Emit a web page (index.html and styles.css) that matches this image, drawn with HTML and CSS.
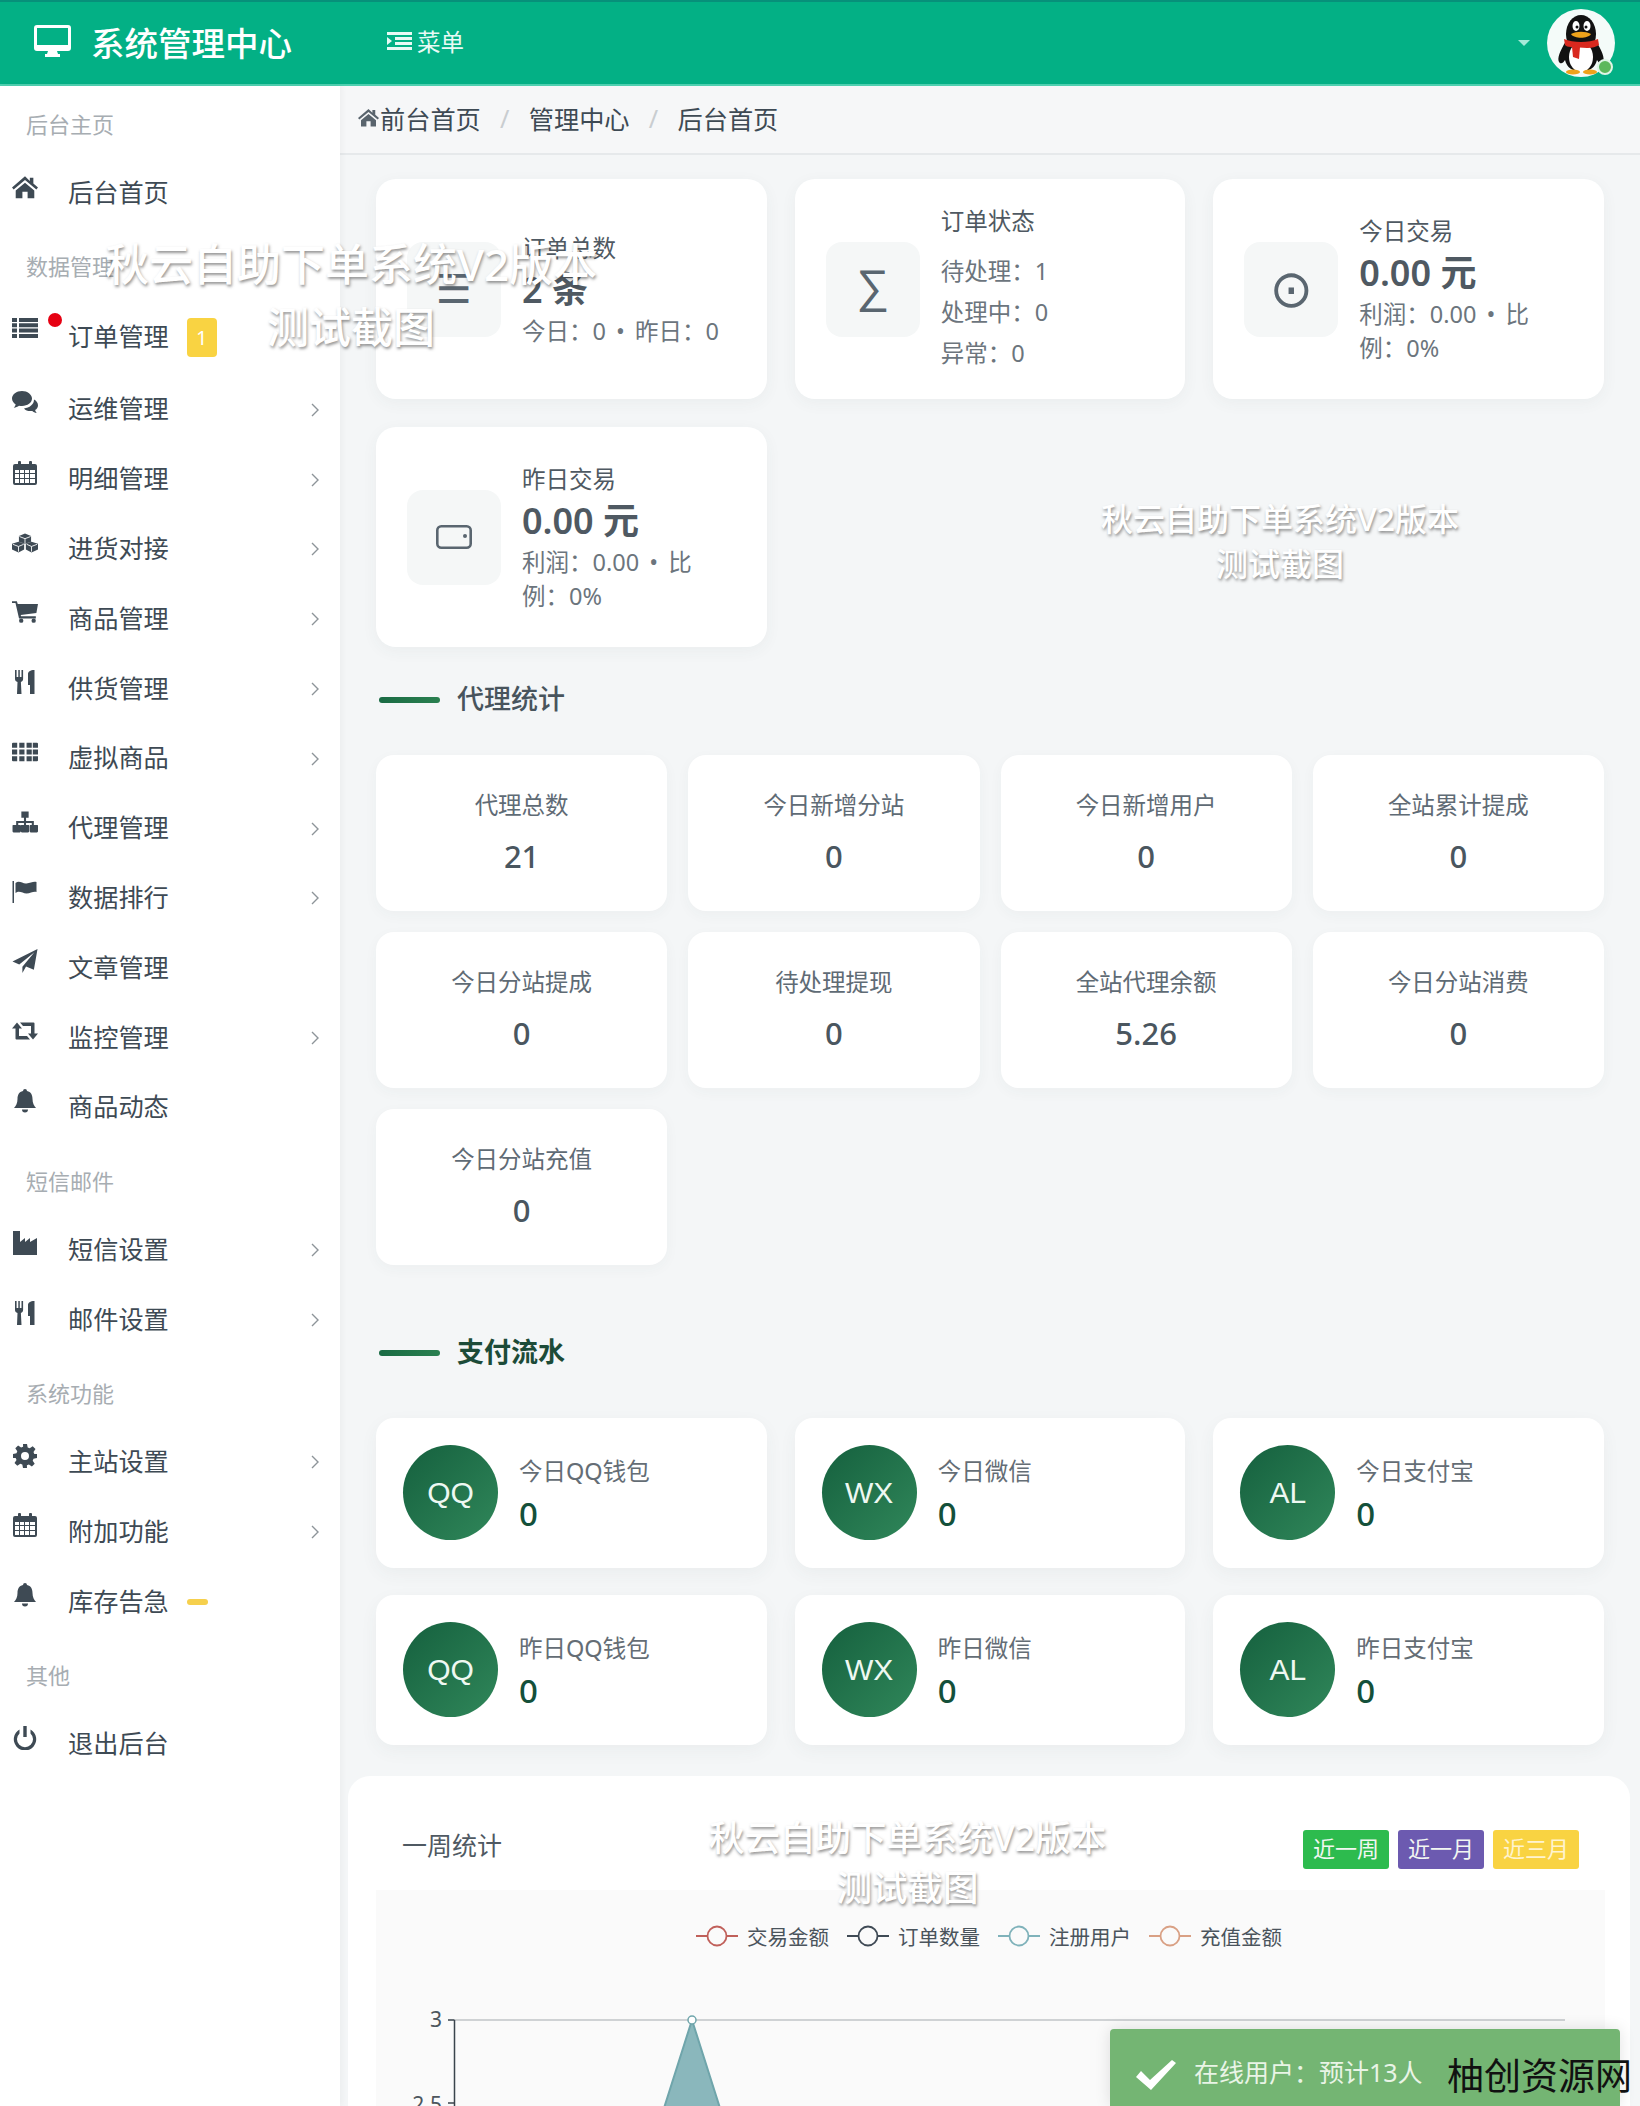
FILE: index.html
```html
<!DOCTYPE html>
<html lang="zh-CN">
<head>
  <meta charset="utf-8">
  <title>系统管理中心</title>
  <link rel="stylesheet" href="styles.css">
</head>
<body>
  <svg class="icon-defs" width="0" height="0">
    <defs>
      <symbol id="i-home" viewBox="0 0 28 24"><path d="M14 .500 0 12.500l1.800 2.300L14 4.500l12.200 10.300 1.800-2.300-5-4.300V2h-3.800v3.500zM4 15.800V24h7.200v-7h5.600v7H24v-8.200L14 7.300z"/></symbol>
      <symbol id="i-list" viewBox="0 0 26 20"><path d="M0 0h5v4H0zM7 0h19v4H7zM0 5.300h5v4H0zM7 5.300h19v4H7zM0 10.600h5v4H0zM7 10.600h19v4H7zM0 16h5v4H0zM7 16h19v4H7z"/></symbol>
      <symbol id="i-comments" viewBox="0 0 26 24"><path d="M10 0C4.500 0 0 3.400 0 7.600c0 2.400 1.500 4.500 3.700 5.900-.3 1.300-1 2.400-1.900 3.300 2-.3 3.800-1 5.200-2.100 1 .2 2 .3 3 .3 5.500 0 10-3.300 10-7.400S15.500 0 10 0z"/><path d="M22 8.500c.1 4.900-4.500 8.400-10 8.900 1.400 1.700 3.700 2.700 6.300 2.700.7 0 1.300-.1 2-.2 1 1 2.600 1.800 4.400 2.100-.8-.8-1.400-1.800-1.600-2.900 1.800-1.200 2.900-3 2.900-4.900 0-2.400-1.600-4.500-4-5.700z"/></symbol>
      <symbol id="i-calendar" viewBox="0 0 24 24"><path fill-rule="evenodd" d="M2 3h3V1a1 1 0 0 1 1-1h1a1 1 0 0 1 1 1v2h8V1a1 1 0 0 1 1-1h1a1 1 0 0 1 1 1v2h3a2 2 0 0 1 2 2v17a2 2 0 0 1-2 2H2a2 2 0 0 1-2-2V5a2 2 0 0 1 2-2zM2 9v3h4V9zm5 0v3h4V9zm5 0v3h4V9zm5 0v3h5V9zM2 13v4h4v-4zm5 0v4h4v-4zm5 0v4h4v-4zm5 0v4h5v-4zM2 18v4h4v-4zm5 0v4h4v-4zm5 0v4h4v-4zm5 0v4h5v-4z"/></symbol>
      <symbol id="i-cubes" viewBox="0 0 30 22"><path d="M15 0l7 3v6.500L15 12l-7-2.500V3zM7.500 9.500 14 12v6.500L7.500 22 0 18.500V12zM22.500 9.500 30 12v6.500L22.500 22 16 18.500V12z"/><path d="M8.500 3.500 15 6l6.500-2.500M15 6v5.500M1 12.500 7.500 15l6-2.500M7.500 15v6M17 12.500l5.500 2.500 6.500-2.500M22.500 15v6" fill="none" stroke="#fff" stroke-width="1"/></symbol>
      <symbol id="i-cart" viewBox="0 0 24 20"><path d="M0 0h4.500l.8 2.500H24l-1.500 8.500-14.500 1.700.4 1.300H22v2H6.500L3.200 1.800H0z"/><circle cx="8.500" cy="18" r="2"/><circle cx="20" cy="18" r="2"/></symbol>
      <symbol id="i-cutlery" viewBox="0 0 20 24"><path d="M0 0h1.600v7h1.700V0h1.500v7h1.700V0h1.600v9c0 1.500-1 2.500-2.200 3L6.500 24H2l.5-12C1 11.500 0 10.500 0 9zM13 4c0-2 2-4 6.500-4v24H15v-9h-2z"/></symbol>
      <symbol id="i-grid" viewBox="0 0 25 18"><path d="M0 1a1 1 0 0 1 1-1h4v5H0zM7 0h5v5H7zM14 0h5v5h-5zM20 0h4a1 1 0 0 1 1 1v4h-5zM0 6.500h5v5H0zM7 6.500h5v5H7zM14 6.500h5v5h-5zM20 6.500h5v5h-5zM0 13h5v5H1a1 1 0 0 1-1-1zM7 13h5v5H7zM14 13h5v5h-5zM20 13h5v4a1 1 0 0 1-1 1h-4z"/></symbol>
      <symbol id="i-sitemap" viewBox="0 0 25 20"><path d="M9 0h7v6h-2.500v3H21v4h3.500a.5.500 0 0 1 .5.500V19a1 1 0 0 1-1 1h-6a1 1 0 0 1-1-1v-5.500a.5.500 0 0 1 .5-.5H19v-2h-5.500v2H16a.5.500 0 0 1 .5.500V19a1 1 0 0 1-1 1h-6a1 1 0 0 1-1-1v-5.500a.5.500 0 0 1 .5-.5h2.500v-2H6v2h2a.5.500 0 0 1 .5.500V19a1 1 0 0 1-1 1h-6a1 1 0 0 1-1-1v-5.500a.5.500 0 0 1 .5-.5H4V9h7.500V6H9z"/></symbol>
      <symbol id="i-flag" viewBox="0 0 25 24"><path d="M0 1h1.500v22H0zM3 3c4-3 7 1 11 .5 4-.5 7-2.500 10-1.500v10c-3-1-6 1.500-10 1.500S7 10 3 13z"/></symbol>
      <symbol id="i-plane" viewBox="0 0 24 23"><path d="M24 0 20.500 20 13 16.800 9.500 23V17L21 3 6.500 14.800 0 12z"/></symbol>
      <symbol id="i-retweet" viewBox="0 0 26 17"><path d="M5 0l5 6H7v7.500h8l3 3.500H4.500a1 1 0 0 1-1-1V6H0zM8 0h13.500a1 1 0 0 1 1 1v10H26l-5 6-5-6h3V3.500h-8z"/></symbol>
      <symbol id="i-bell" viewBox="0 0 22 24"><path d="M11 0a2 2 0 0 1 2 2c4 .8 5.500 4 5.500 8 0 4 1.500 7 3.500 9H0c2-2 3.500-5 3.500-9 0-4 1.500-7.200 5.500-8a2 2 0 0 1 2-2zM8 20.500h6a3 3 0 0 1-6 0z"/></symbol>
      <symbol id="i-factory" viewBox="0 0 24 24"><path d="M0 0h7v11l5-4v4l5-4v4l7-4v17H0z"/></symbol>
      <symbol id="i-gear" viewBox="0 0 24 24"><path fill-rule="evenodd" d="M10 0h4l.7 3.500 2 .8 3-2 2.800 2.800-2 3 .8 2L24 10v4l-3.500.7-.8 2 2 3-2.800 2.800-3-2-2 .8L14 24h-4l-.7-3.500-2-.8-3 2-2.800-2.800 2-3-.8-2L0 14v-4l3.500-.7.8-2-2-3 2.800-2.800 3 2 2-.8zM12 8a4 4 0 1 0 0 8 4 4 0 0 0 0-8z"/></symbol>
      <symbol id="i-power" viewBox="0 0 22 24"><path d="M9.300 0h3.400v11H9.300zM5.500 3.500v3.900A8 8 0 1 0 16.500 7.400V3.500a11.200 11.200 0 1 1-11 0z"/></symbol>
      <symbol id="i-chevron" viewBox="0 0 8 14"><path d="M1 1l6 6-6 6" fill="none" stroke="currentColor" stroke-width="1.400"/></symbol>
    </defs>
  </svg>

  <header class="topbar">
    <div class="brand">
      <svg class="brand-icon" viewBox="0 0 37 32"><path fill-rule="evenodd" d="M3 0h31a3 3 0 0 1 3 3v20a3 3 0 0 1-3 3H23l1 3h2v3H11v-3h2l1-3H3a3 3 0 0 1-3-3V3a3 3 0 0 1 3-3zm0 3v17h31V3z"/></svg>
      <span>系统管理中心</span>
    </div>
    <div class="menu-toggle">
      <svg class="menu-icon" viewBox="0 0 25 18"><path d="M0 0h25v3H0zM8 5h17v3H8zM8 10h17v3H8zM0 15h25v3H0zM0 5l5 4-5 4z"/></svg>
      <span>菜单</span>
    </div>
    <div class="user-box">
      <span class="caret"></span>
      <div class="avatar">
        <svg viewBox="0 0 68 68">
          <circle cx="34" cy="34" r="34" fill="#f4fbf9"/>
          <ellipse cx="34" cy="25" rx="15" ry="19" fill="#111"/>
          <path d="M19 32c-6 10-9 17-7 21 2 3 5 0 6-2 2 8 7 11 16 11s14-3 16-11c1 2 4 5 6 2 2-4-1-11-7-21z" fill="#111"/>
          <ellipse cx="34" cy="48" rx="12" ry="15" fill="#fff"/>
          <path d="M17 30c9 4 25 4 34 0l1 6c-3 2-7 3-11 3l-1 0-16-1c-3 0-5-1-6-2z" fill="#d8281e"/>
          <path d="M25 38h8l-1 12-6-2z" fill="#d8281e"/>
          <ellipse cx="29" cy="17" rx="3.500" ry="5" fill="#fff"/>
          <ellipse cx="40" cy="17" rx="3.500" ry="5" fill="#fff"/>
          <circle cx="30" cy="18" r="1.500" fill="#111"/>
          <circle cx="39" cy="18" r="1.500" fill="#111"/>
          <path d="M24 25c6-3 14-3 20 0-3 5-17 5-20 0z" fill="#eea21b"/>
          <ellipse cx="26" cy="63" rx="7" ry="2.500" fill="#eea21b"/>
          <ellipse cx="43" cy="63" rx="7" ry="2.500" fill="#eea21b"/>
        </svg>
        <span class="online-dot"></span>
      </div>
    </div>
  </header>

  <div class="layout">
    <aside class="sidebar">
      <div class="nav-label">后台主页</div>
      <a class="nav-item"><svg class="nav-icon"><use href="#i-home"/></svg><span>后台首页</span></a>

      <div class="nav-label">数据管理</div>
      <a class="nav-item nav-item-tall">
        <svg class="nav-icon"><use href="#i-list"/></svg>
        <i class="red-dot"></i>
        <span>订单管理</span>
        <b class="nav-badge">1</b>
      </a>
      <a class="nav-item"><svg class="nav-icon"><use href="#i-comments"/></svg><span>运维管理</span><svg class="chevron"><use href="#i-chevron"/></svg></a>
      <a class="nav-item"><svg class="nav-icon"><use href="#i-calendar"/></svg><span>明细管理</span><svg class="chevron"><use href="#i-chevron"/></svg></a>
      <a class="nav-item"><svg class="nav-icon"><use href="#i-cubes"/></svg><span>进货对接</span><svg class="chevron"><use href="#i-chevron"/></svg></a>
      <a class="nav-item"><svg class="nav-icon"><use href="#i-cart"/></svg><span>商品管理</span><svg class="chevron"><use href="#i-chevron"/></svg></a>
      <a class="nav-item"><svg class="nav-icon"><use href="#i-cutlery"/></svg><span>供货管理</span><svg class="chevron"><use href="#i-chevron"/></svg></a>
      <a class="nav-item"><svg class="nav-icon"><use href="#i-grid"/></svg><span>虚拟商品</span><svg class="chevron"><use href="#i-chevron"/></svg></a>
      <a class="nav-item"><svg class="nav-icon"><use href="#i-sitemap"/></svg><span>代理管理</span><svg class="chevron"><use href="#i-chevron"/></svg></a>
      <a class="nav-item"><svg class="nav-icon"><use href="#i-flag"/></svg><span>数据排行</span><svg class="chevron"><use href="#i-chevron"/></svg></a>
      <a class="nav-item"><svg class="nav-icon"><use href="#i-plane"/></svg><span>文章管理</span></a>
      <a class="nav-item"><svg class="nav-icon"><use href="#i-retweet"/></svg><span>监控管理</span><svg class="chevron"><use href="#i-chevron"/></svg></a>
      <a class="nav-item"><svg class="nav-icon"><use href="#i-bell"/></svg><span>商品动态</span></a>

      <div class="nav-label">短信邮件</div>
      <a class="nav-item"><svg class="nav-icon"><use href="#i-factory"/></svg><span>短信设置</span><svg class="chevron"><use href="#i-chevron"/></svg></a>
      <a class="nav-item"><svg class="nav-icon"><use href="#i-cutlery"/></svg><span>邮件设置</span><svg class="chevron"><use href="#i-chevron"/></svg></a>

      <div class="nav-label">系统功能</div>
      <a class="nav-item"><svg class="nav-icon"><use href="#i-gear"/></svg><span>主站设置</span><svg class="chevron"><use href="#i-chevron"/></svg></a>
      <a class="nav-item"><svg class="nav-icon"><use href="#i-calendar"/></svg><span>附加功能</span><svg class="chevron"><use href="#i-chevron"/></svg></a>
      <a class="nav-item"><svg class="nav-icon"><use href="#i-bell"/></svg><span>库存告急</span><i class="stock-dash"></i></a>

      <div class="nav-label">其他</div>
      <a class="nav-item"><svg class="nav-icon"><use href="#i-power"/></svg><span>退出后台</span></a>
    </aside>

    <main class="main">
      <nav class="crumbs">
        <svg class="crumb-home"><use href="#i-home"/></svg>
        <span>前台首页</span>
        <i class="crumb-sep">/</i>
        <span>管理中心</span>
        <i class="crumb-sep">/</i>
        <span>后台首页</span>
      </nav>

      <div class="content">
        <section class="grid-3">
          <div class="info-card">
            <div class="tile tile-glyph">☰</div>
            <div class="info-text">
              <div class="info-title">订单总数</div>
              <div class="info-value">2 条</div>
              <div class="info-sub">今日：0 • 昨日：0</div>
            </div>
          </div>
          <div class="info-card">
            <div class="tile tile-glyph tile-sigma">∑</div>
            <div class="info-text info-text-list">
              <div class="info-title">订单状态</div>
              <div class="info-line">待处理：1</div>
              <div class="info-line">处理中：0</div>
              <div class="info-line">异常：0</div>
            </div>
          </div>
          <div class="info-card">
            <div class="tile tile-glyph tile-dot">⊙</div>
            <div class="info-text">
              <div class="info-title">今日交易</div>
              <div class="info-value">0.00 元</div>
              <div class="info-sub">利润：0.00 • 比<br>例：0%</div>
            </div>
          </div>
          <div class="info-card">
            <div class="tile">
              <svg class="wallet" viewBox="0 0 36 24"><rect x="1.300" y="1.300" width="33.400" height="21.400" rx="4" fill="none" stroke="currentColor" stroke-width="2.600"/><circle cx="29" cy="11" r="2" fill="currentColor"/></svg>
            </div>
            <div class="info-text">
              <div class="info-title">昨日交易</div>
              <div class="info-value">0.00 元</div>
              <div class="info-sub">利润：0.00 • 比<br>例：0%</div>
            </div>
          </div>
        </section>

        <h3 class="section-head section-head-agent"><i class="section-bar"></i>代理统计</h3>
        <section class="grid-4">
          <div class="stat-card"><div class="stat-title">代理总数</div><div class="stat-value">21</div></div>
          <div class="stat-card"><div class="stat-title">今日新增分站</div><div class="stat-value">0</div></div>
          <div class="stat-card"><div class="stat-title">今日新增用户</div><div class="stat-value">0</div></div>
          <div class="stat-card"><div class="stat-title">全站累计提成</div><div class="stat-value">0</div></div>
          <div class="stat-card"><div class="stat-title">今日分站提成</div><div class="stat-value">0</div></div>
          <div class="stat-card"><div class="stat-title">待处理提现</div><div class="stat-value">0</div></div>
          <div class="stat-card"><div class="stat-title">全站代理余额</div><div class="stat-value">5.26</div></div>
          <div class="stat-card"><div class="stat-title">今日分站消费</div><div class="stat-value">0</div></div>
          <div class="stat-card"><div class="stat-title">今日分站充值</div><div class="stat-value">0</div></div>
        </section>

        <h3 class="section-head section-head-pay"><i class="section-bar"></i>支付流水</h3>
        <section class="grid-3 grid-pay">
          <div class="pay-card"><div class="pay-circle">QQ</div><div class="pay-text"><div class="pay-title">今日QQ钱包</div><div class="pay-value">0</div></div></div>
          <div class="pay-card"><div class="pay-circle">WX</div><div class="pay-text"><div class="pay-title">今日微信</div><div class="pay-value">0</div></div></div>
          <div class="pay-card"><div class="pay-circle">AL</div><div class="pay-text"><div class="pay-title">今日支付宝</div><div class="pay-value">0</div></div></div>
          <div class="pay-card"><div class="pay-circle">QQ</div><div class="pay-text"><div class="pay-title">昨日QQ钱包</div><div class="pay-value">0</div></div></div>
          <div class="pay-card"><div class="pay-circle">WX</div><div class="pay-text"><div class="pay-title">昨日微信</div><div class="pay-value">0</div></div></div>
          <div class="pay-card"><div class="pay-circle">AL</div><div class="pay-text"><div class="pay-title">昨日支付宝</div><div class="pay-value">0</div></div></div>
        </section>

        <section class="chart-panel">
          <div class="chart-head">
            <span class="chart-title">一周统计</span>
            <div class="range-btns">
              <button class="range-btn range-green">近一周</button>
              <button class="range-btn range-purple">近一月</button>
              <button class="range-btn range-yellow">近三月</button>
            </div>
          </div>
          <div class="chart-body">
            <div class="legend">
              <span class="legend-item"><svg class="legend-mark legend-red" viewBox="0 0 42 24"><path d="M0 12h42"/><circle cx="21" cy="12" r="9.500"/></svg>交易金额</span>
              <span class="legend-item"><svg class="legend-mark legend-navy" viewBox="0 0 42 24"><path d="M0 12h42"/><circle cx="21" cy="12" r="9.500"/></svg>订单数量</span>
              <span class="legend-item"><svg class="legend-mark legend-teal" viewBox="0 0 42 24"><path d="M0 12h42"/><circle cx="21" cy="12" r="9.500"/></svg>注册用户</span>
              <span class="legend-item"><svg class="legend-mark legend-orange" viewBox="0 0 42 24"><path d="M0 12h42"/><circle cx="21" cy="12" r="9.500"/></svg>充值金额</span>
            </div>
            <svg class="plot" viewBox="0 0 1228 155">
              <path d="M78.500 68H1189" stroke="#cfd2d4" stroke-width="2" fill="none"/>
              <path d="M78.500 68V260M72 68h6.500M72 151h6.500" stroke="#3a444c" stroke-width="1.500" fill="none"/>
              <text x="66" y="75" text-anchor="end" class="plot-label">3</text>
              <text x="66" y="160" text-anchor="end" class="plot-label">2.5</text>
              <path d="M255 260 316 68 377 260z" fill="#8ab7bc" stroke="#6fa5ab" stroke-width="2"/>
              <circle cx="316" cy="68" r="4" fill="#fff" stroke="#6fa5ab" stroke-width="1.500"/>
            </svg>
          </div>
        </section>
      </div>
    </main>
  </div>

  <div class="watermark wm-one">秋云自助下单系统V2版本<br><small>测试截图</small></div>
  <div class="watermark wm-two">秋云自助下单系统V2版本<br>测试截图</div>
  <div class="watermark wm-three">秋云自助下单系统V2版本<br>测试截图</div>

  <div class="toast">
    <svg class="toast-check" viewBox="0 0 40 30"><path d="M0 17l5-6 9 9L36 0l4 3-25 27z"/></svg>
    <span>在线用户：预计13人</span>
  </div>
  <div class="site-mark">柚创资源网</div>
</body>
</html>
```

FILE: styles.css
```css
* {
  box-sizing: border-box;
}
html, body {
  margin: 0;
  height: 100%;
}
body {
  position: relative;
  display: flex;
  flex-direction: column;
  height: 100vh;
  overflow: hidden;
  background-color: #f4f6f7;
  color: #4f5962;
  font-family: "Noto Sans", "Noto Sans CJK SC", sans-serif;
  font-size: 23.5px;
}
.icon-defs {
  position: absolute;
}

/* top bar */
.topbar {
  display: flex;
  align-items: center;
  flex: none;
  height: 86px;
  background-color: #03b085;
  border-top: 2px solid #07907a;
  border-bottom: 2px solid #4fd0b0;
  color: #fff;
}
.brand {
  display: flex;
  align-items: center;
  gap: 20px;
  width: 340px;
  padding: 0 0 4px 34px;
  font-size: 33.5px;
  font-weight: 500;
}
.brand-icon {
  width: 37px;
  height: 32px;
  fill: #fff;
}
.menu-toggle {
  display: flex;
  align-items: center;
  gap: 5px;
  margin-left: 47px;
  padding-bottom: 4px;
  color: #e8faf5;
}
.menu-icon {
  width: 25px;
  height: 18px;
  fill: #e8faf5;
}
.user-box {
  display: flex;
  align-items: center;
  gap: 17px;
  margin-left: auto;
  padding-right: 25px;
}
.caret {
  width: 0;
  height: 0;
  border-left: 6px solid transparent;
  border-right: 6px solid transparent;
  border-top: 6px solid #a5ead9;
}
.avatar {
  position: relative;
  width: 68px;
  height: 68px;
}
.avatar svg {
  display: block;
  width: 68px;
  height: 68px;
}
.online-dot {
  position: absolute;
  right: 2px;
  bottom: 2px;
  width: 16px;
  height: 16px;
  background-color: #5cb85c;
  border: 2px solid #dff5e6;
  border-radius: 50%;
}

/* sidebar */
.layout {
  display: flex;
  flex: 1;
  min-height: 0;
}
.sidebar {
  flex: none;
  width: 340px;
  background-color: #fff;
  box-shadow: 2px 0 6px rgba(0, 0, 0, 0.04);
  z-index: 1;
}
.nav-label {
  height: 72.6px;
  padding: 22px 0 0 26px;
  color: #a7adb2;
  font-size: 22px;
  line-height: 32px;
}
.nav-item {
  display: flex;
  align-items: center;
  position: relative;
  height: 69.8px;
  padding: 0 0 5px 68px;
  color: #3e4a54;
  font-size: 25.2px;
}
.nav-item-tall {
  height: 74px;
}
.nav-icon {
  position: absolute;
  left: 12px;
  top: 16px;
  width: 26px;
  height: 24px;
  fill: #3e4a54;
}
.nav-item-tall .nav-icon {
  top: 15px;
}
.chevron {
  margin-left: auto;
  margin-right: 21px;
  margin-top: 5px;
  width: 8px;
  height: 14px;
  color: #8d9499;
}
.red-dot {
  position: absolute;
  left: 48px;
  top: 12px;
  width: 14px;
  height: 14px;
  background-color: #e60012;
  border-radius: 50%;
}
.nav-badge {
  margin: 5px 0 0 18px;
  width: 30px;
  height: 39px;
  background-color: #f9d342;
  border-radius: 4px;
  color: #fff;
  font-size: 20px;
  font-weight: 400;
  line-height: 39px;
  text-align: center;
}
.stock-dash {
  margin: 5px 0 0 18px;
  width: 21px;
  height: 6px;
  background-color: #f6d04d;
  border-radius: 3px;
}

/* breadcrumb */
.main {
  flex: 1;
  min-width: 0;
}
.crumbs {
  display: flex;
  align-items: center;
  height: 69px;
  padding: 0 0 4px 18px;
  background-color: #f6f7f8;
  border-bottom: 2px solid #e6e9eb;
  color: #3e4a54;
  font-size: 25.2px;
}
.crumb-home {
  width: 21px;
  height: 19px;
  margin-right: 1px;
  fill: #59646d;
}
.crumb-sep {
  width: 48px;
  color: #c9cdd0;
  font-style: normal;
  text-align: center;
}

/* cards */
.content {
  padding: 24px 36px 0;
}
.grid-3 {
  display: grid;
  grid-template-columns: repeat(3, 1fr);
  gap: 28px;
}
.info-card {
  display: flex;
  align-items: center;
  gap: 21px;
  height: 220px;
  padding: 0 31px;
  background-color: #fff;
  border-radius: 20px;
  box-shadow: 0 4px 16px rgba(60, 70, 80, 0.05);
}
.tile {
  display: flex;
  align-items: center;
  justify-content: center;
  flex: none;
  width: 94px;
  height: 95px;
  background-color: #f5f7f7;
  border-radius: 16px;
  color: #5a6670;
}
.tile-glyph {
  font-family: "DejaVu Sans", sans-serif;
  font-size: 40px;
}
.tile-sigma {
  padding-bottom: 6px;
  font-family: "Liberation Sans", sans-serif;
  font-size: 46px;
}
.tile-dot {
  font-size: 52px;
}
.wallet {
  width: 36px;
  height: 24px;
}
.info-title {
  line-height: 34px;
}
.info-value {
  color: #4f5962;
  font-size: 36px;
  font-weight: 600;
  line-height: 49px;
}
.info-sub {
  color: #6c757d;
  line-height: 34px;
  word-spacing: 4px;
}
.info-text-list .info-title {
  margin-bottom: 13px;
}
.info-line {
  color: #6c757d;
  line-height: 41px;
}

/* section titles */
.section-head {
  display: flex;
  align-items: center;
  gap: 17px;
  height: 54px;
  margin: 26px 0 28px;
  padding: 0 0 3px 3px;
  font-size: 27px;
  font-weight: 500;
  line-height: 40px;
}
.section-head-agent {
  color: #48545c;
}
.section-head-pay {
  margin: 61px 0 38px;
  color: #1c4b38;
  font-weight: 700;
}
.section-bar {
  width: 61px;
  height: 6px;
  margin-top: 3px;
  background: linear-gradient(90deg, #1a6b44, #2a8050);
  border-radius: 3px;
}

/* agent numbers */
.grid-4 {
  display: grid;
  grid-template-columns: repeat(4, 1fr);
  gap: 21px;
}
.stat-card {
  height: 156px;
  padding-top: 32px;
  background-color: #fff;
  border-radius: 18px;
  box-shadow: 0 4px 14px rgba(60, 70, 80, 0.04);
  text-align: center;
}
.stat-title {
  color: #5f6b75;
  line-height: 36px;
}
.stat-value {
  margin-top: 13px;
  color: #4a565f;
  font-size: 31px;
  font-weight: 500;
  line-height: 40px;
}

/* payment cards */
.grid-pay {
  row-gap: 27px;
}
.pay-card {
  display: flex;
  align-items: center;
  gap: 21px;
  height: 150px;
  padding-left: 27px;
  background-color: #fff;
  border-radius: 18px;
  box-shadow: 0 6px 18px rgba(60, 70, 80, 0.05);
}
.pay-circle {
  flex: none;
  width: 95px;
  height: 95px;
  margin-bottom: 1px;
  background: linear-gradient(135deg, #15603e, #30875a);
  border-radius: 50%;
  color: #eef8f2;
  font-family: "Liberation Sans", sans-serif;
  font-size: 30px;
  line-height: 95px;
  text-align: center;
}
.pay-text {
  padding-top: 3px;
}
.pay-title {
  color: #646d75;
  line-height: 36px;
}
.pay-value {
  margin-top: 3px;
  color: #14503a;
  font-size: 33px;
  font-weight: 500;
  line-height: 44px;
}

/* chart */
.chart-panel {
  margin: 31px -26px 0 -28px;
  padding: 0 25px 0 28px;
  background-color: #fff;
  border-radius: 22px 22px 0 0;
}
.chart-head {
  display: flex;
  align-items: center;
  justify-content: space-between;
  height: 114px;
  padding: 33px 26px 0;
}
.chart-title {
  margin-bottom: 12px;
  color: #4f5962;
  font-size: 25px;
}
.range-btns {
  display: flex;
  gap: 9px;
}
.range-btn {
  width: 86px;
  height: 39px;
  padding: 0 0 6px;
  border: none;
  border-radius: 3px;
  color: #f2f7f2;
  font-family: inherit;
  font-size: 22px;
}
.range-green {
  background-color: #2dbb4e;
}
.range-purple {
  background-color: #6c5ab0;
}
.range-yellow {
  background-color: #f9d342;
  color: #fff4cf;
}
.chart-body {
  padding-top: 34px;
  background-color: #fafafa;
}
.legend {
  display: flex;
  justify-content: center;
  gap: 18px;
  height: 28px;
  padding-right: 3px;
}
.legend-item {
  display: flex;
  align-items: center;
  gap: 9px;
  padding-bottom: 5px;
  color: #4a545c;
  font-size: 20.5px;
}
.legend-mark {
  width: 42px;
  height: 24px;
  fill: #fafafa;
  stroke-width: 1.800;
}
.legend-red {
  stroke: #c0605a;
}
.legend-navy {
  stroke: #3f4a55;
}
.legend-teal {
  stroke: #7fb2ba;
}
.legend-orange {
  stroke: #d9a084;
}
.plot {
  display: block;
  width: 1228px;
  height: 155px;
}
.plot-label {
  fill: #4d565d;
  font-size: 21px;
}

/* overlays */
.watermark {
  position: absolute;
  z-index: 5;
  color: #fff;
  font-weight: 500;
  line-height: 1.4;
  text-align: center;
  text-shadow: 1px 2px 3px rgba(60, 60, 60, 0.55);
  white-space: nowrap;
}
.wm-one {
  left: 105px;
  top: 234px;
  font-size: 44px;
}
.wm-one small {
  font-size: 42px;
}
.wm-two {
  left: 1101px;
  top: 497px;
  font-size: 32px;
}
.wm-three {
  left: 709px;
  top: 1813px;
  font-size: 35.5px;
}
.toast {
  position: absolute;
  z-index: 6;
  left: 1110px;
  top: 2029px;
  bottom: 0;
  display: flex;
  align-items: center;
  gap: 18px;
  width: 510px;
  padding: 6px 0 0 26px;
  background-color: #74b573;
  border-radius: 4px 4px 0 0;
  box-shadow: 0 0 16px rgba(0, 0, 0, 0.12);
  color: #e9f4e6;
  font-size: 25px;
}
.toast-check {
  margin-top: 9px;
  width: 40px;
  height: 30px;
  fill: #fff;
}
.site-mark {
  position: absolute;
  z-index: 7;
  left: 1447px;
  top: 2050px;
  color: #111;
  font-size: 37px;
  line-height: 52px;
  white-space: nowrap;
}
```
